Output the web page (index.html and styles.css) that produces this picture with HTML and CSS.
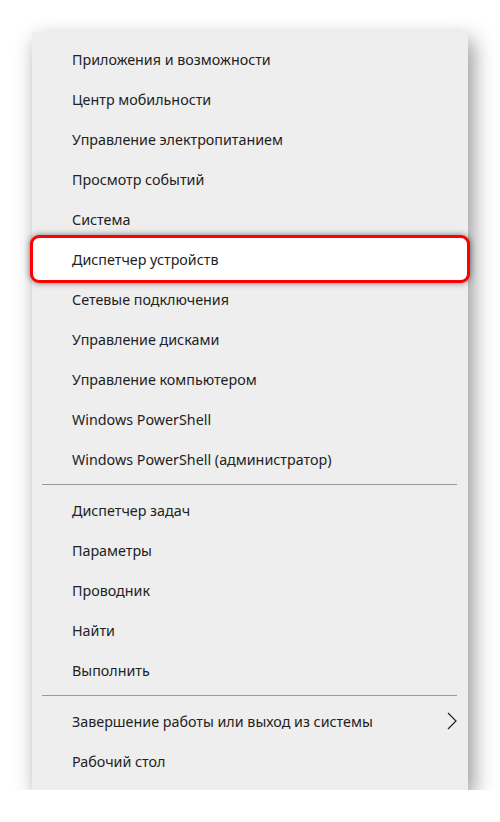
FILE: index.html
```html
<!DOCTYPE html>
<html>
<head>
    <title>Меню Win+X</title>
    <link rel="stylesheet" href="styles.css">
</head>
<body>
    <div class="menu">
        <div class="item">Приложения и возможности</div>
        <div class="item">Центр мобильности</div>
        <div class="item">Управление электропитанием</div>
        <div class="item">Просмотр событий</div>
        <div class="item">Система</div>
        <div class="item marked">Диспетчер устройств</div>
        <div class="item">Сетевые подключения</div>
        <div class="item">Управление дисками</div>
        <div class="item">Управление компьютером</div>
        <div class="item">Windows PowerShell</div>
        <div class="item">Windows PowerShell (администратор)</div>
        <div class="sep"></div>
        <div class="item">Диспетчер задач</div>
        <div class="item">Параметры</div>
        <div class="item">Проводник</div>
        <div class="item">Найти</div>
        <div class="item">Выполнить</div>
        <div class="sep"></div>
        <div class="item">
            <span>Завершение работы или выход из системы</span>
            <svg class="arrow" width="10" height="18" viewBox="0 0 10 18">
                <path d="M1 1 L9 9 L1 17" fill="none" stroke="#222" stroke-width="1.2"/>
            </svg>
        </div>
        <div class="item">Рабочий стол</div>
    </div>
</body>
</html>
```

FILE: styles.css
```css
body {
    margin: 0;
    background: #fff;
    font-family: "Noto Sans", "Open Sans", sans-serif;
}

.menu {
    width: 436px;
    margin: 32px 0 0 32px;
    padding: 7px 0 9px;
    background-color: #eeeeee;
    box-shadow: 5px 8px 20px rgba(0, 0, 0, 0.42);
}

.item {
    height: 40px;
    padding: 0 11px 0 40px;
    display: flex;
    align-items: center;
    justify-content: space-between;
    font-size: 14.3px;
    color: #222;
}

.item.marked {
    position: relative;
    height: 48px;
    margin: -4px -2px;
    padding-left: 39px;
    box-sizing: border-box;
    border: 3px solid #ff0000;
    border-radius: 9px;
    background-color: #fff;
    box-shadow: 0 0 6px rgba(0, 0, 0, 0.5);
}

.sep {
    height: 1px;
    margin: 5px 11px 5px 10px;
    background-color: #9a9a9a;
}

.arrow {
    display: block;
}
```
